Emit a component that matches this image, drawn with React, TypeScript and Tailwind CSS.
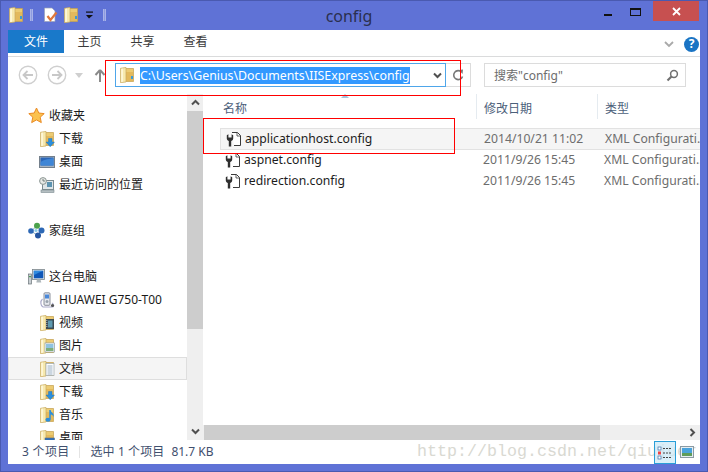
import React from "react";

const fontCls = "font-['Noto_Sans','Noto_Sans_CJK_SC',sans-serif]";

function Folder({ overlay, size = 16, dot = false }: { overlay?: React.ReactNode; size?: number; dot?: boolean }) {
  return (
    <svg width={size} height={size} viewBox="0 0 16 16" className="shrink-0">
      <path d="M6 1.5 H14.5 V14.5 H6 Z" fill="#eccb72" stroke="#c39f4e" strokeWidth=".7" />
      <path d="M6.5 5 H14 V14 H6.5 Z" fill="#e3b95c" />
      <path d="M1.5 1.3 L7 .4 V15 L1.5 15.7 Z" fill="#f7e9ae" stroke="#c9a95c" strokeWidth=".7" />
      <path d="M2.2 1.9 L4 1.6 V14.8 L2.2 15 Z" fill="#fdf6d6" />
      {dot && <rect x="12" y="9" width="2" height="3" fill="#3b9ad8" />}
      {overlay}
    </svg>
  );
}

const ovDown = (
  <g>
    <path d="M9.5 7.5 H13 V11 H15.5 L11.2 15.8 L7 11 H9.5 Z" fill="#2b8fdc" stroke="#1a6db0" strokeWidth=".4" />
  </g>
);
const ovVideo = (
  <g>
    <rect x="7" y="4" width="8" height="10" fill="#3d4a52" />
    <rect x="9" y="5.5" width="4.5" height="7" fill="#5f9ab0" />
    <path d="M7.8 5v8" stroke="#cdd6da" strokeWidth=".9" strokeDasharray="1 1" />
  </g>
);
const ovPic = (
  <g>
    <rect x="6" y="5" width="9.5" height="9" fill="#fff" stroke="#8b9aa3" strokeWidth=".7" />
    <rect x="7" y="6" width="7.5" height="4" fill="#8fc3e0" />
    <rect x="7" y="10" width="7.5" height="3" fill="#7fae7a" />
  </g>
);
const ovDoc = (
  <g>
    <rect x="7" y="2.5" width="8" height="12" fill="#fff" stroke="#9aa6ad" strokeWidth=".7" />
    <path d="M8.5 5h5M8.5 7h5M8.5 9h5M8.5 11h5M8.5 13h5" stroke="#7d99b3" strokeWidth=".8" />
  </g>
);
const ovMusic = (
  <g>
    <path d="M11 3 V12.5" stroke="#2b8fdc" strokeWidth="1.5" />
    <ellipse cx="9" cy="12.8" rx="2.6" ry="2" fill="#2b8fdc" />
    <path d="M11 3 C12.5 6 15.5 6 14.5 10 C14 8 12.5 7.5 11 7.5 Z" fill="#2b8fdc" />
  </g>
);
const ovDesk = (
  <g>
    <rect x="6" y="8" width="9.5" height="7" fill="#2f6fb8" stroke="#5a6f85" strokeWidth=".6" />
    <rect x="6" y="13.5" width="9.5" height="1.5" fill="#39526e" />
  </g>
);

function Star() {
  return (
    <svg width="17" height="17" viewBox="0 0 17 17" className="shrink-0">
      <path d="M8.5 1 L10.8 6 L16.2 6.6 L12.2 10.2 L13.3 15.6 L8.5 12.9 L3.7 15.6 L4.8 10.2 L.8 6.6 L6.2 6 Z" fill="#fbc24e" stroke="#ea8a24" strokeWidth="1" />
    </svg>
  );
}
function Desktop() {
  return (
    <svg width="16" height="16" viewBox="0 0 16 16" className="shrink-0">
      <rect x=".5" y="2.5" width="15" height="11" fill="#a9b4bf" stroke="#74808c" />
      <rect x="1.5" y="3.5" width="13" height="8" fill="#2b66b8" />
      <path d="M1.5 8 C6 5 10 5 14.5 4 V11.5 H1.5 Z" fill="#3f86d6" />
    </svg>
  );
}
function Recent() {
  return (
    <svg width="16" height="16" viewBox="0 0 16 16" className="shrink-0">
      <rect x="3.5" y="3.5" width="11" height="9" fill="#dfe5e7" stroke="#7c8a8f" />
      <rect x="8" y="5" width="5" height="5" fill="#5c93b0" />
      <circle cx="4" cy="4" r="3.4" fill="#e7e9e6" stroke="#8a9592" />
      <path d="M4 2v2h2" stroke="#5a6766" fill="none" strokeWidth=".8" />
      <rect x="2" y="13" width="13" height="2.5" fill="#b5bfc2" stroke="#7c8a8f" strokeWidth=".6" />
    </svg>
  );
}
function HomeGroup() {
  return (
    <svg width="17" height="17" viewBox="0 0 17 17" className="shrink-0">
      <path d="M9 4 L3 9 L9 13 L13 9 Z" stroke="#8fb4c8" fill="none" />
      <circle cx="9" cy="3.8" r="3" fill="#4ca24c" />
      <circle cx="3" cy="9" r="2.8" fill="#2d68b5" />
      <circle cx="13.5" cy="8.5" r="3" fill="#2d68b5" />
      <circle cx="10" cy="13.5" r="3" fill="#2555a0" />
      <circle cx="8" cy="8.5" r="1.6" fill="#8ecbe8" />
    </svg>
  );
}
function Computer() {
  return (
    <svg width="17" height="17" viewBox="0 0 17 17" className="shrink-0">
      <rect x=".5" y="6" width="3" height="10" fill="#c8ced2" stroke="#6a7479" strokeWidth=".7" />
      <rect x="1" y="8" width="2" height="1.2" fill="#4d9c5a" />
      <rect x="4.5" y="1.5" width="12" height="10" fill="#dfe4e7" stroke="#7c868c" strokeWidth=".8" />
      <rect x="5.8" y="2.8" width="9.5" height="7.5" fill="#0f57b8" />
      <path d="M5.8 7 C9 6 12 3.5 15.3 3 V2.8 H5.8 Z" fill="#2f8ae0" />
      <path d="M9 11.5h3.5l.8 3h-5z" fill="#aeb7bb" />
    </svg>
  );
}
function Phone() {
  return (
    <svg width="16" height="16" viewBox="0 0 16 16" className="shrink-0">
      <path d="M3.5 7 C1 9 1.5 14 4 15 H13 C15 15 15 12 13 11" fill="none" stroke="#a9a9c9" strokeWidth="1.1" />
      <rect x="5" y=".8" width="6" height="12.5" rx="1" fill="#e7e9ee" stroke="#6e7482" strokeWidth=".8" />
      <rect x="6" y="2.5" width="4" height="4" fill="#4a88d8" />
      <circle cx="8" cy="9.5" r="1.5" fill="#9aa3ad" />
      <circle cx="13.5" cy="13.5" r="1.6" fill="#555" />
    </svg>
  );
}
function Cfg() {
  return (
    <svg width="16" height="16" viewBox="0 0 16 16" className="shrink-0">
      <path d="M6 1.5 H11.5 L14.5 4.5 V14.5 H8" fill="#fff" stroke="#3a3a3a" strokeWidth="1" />
      <path d="M11 1.5 V5 H14.5" fill="none" stroke="#3a3a3a" strokeWidth=".8" />
      <path d="M.8 4.2 V7.4 C.8 9 2.2 9.8 2.8 9.9 V15.4 H5.2 V9.9 C5.8 9.8 7.2 9 7.2 7.4 V4.2 L5.6 3.2 V6.6 H2.4 V3.2 Z" fill="#2f2f2f" />
    </svg>
  );
}

function NavRow({ icon, label, depth = 0, selected = false, top = false }: { icon: React.ReactNode; label: string; depth?: number; selected?: boolean; top?: boolean }) {
  return (
    <div
      className={
        "h-[23px] shrink-0 flex items-center text-[12px] text-[#1a1a1a] border " +
        (selected ? "bg-[#f5f5f5] border-[#dedede]" : "border-transparent") +
        (top ? " mt-[23px]" : "")
      }
    >
      <div className={depth ? "w-[30px] shrink-0" : "w-[19px] shrink-0"} />
      <div className={depth ? "w-[20px] shrink-0 flex" : "w-[21px] shrink-0 flex"}>{icon}</div>
      <span className="whitespace-nowrap">{label}</span>
    </div>
  );
}

function FileRow({ name, date, selected = false }: { name: string; date: string; selected?: boolean }) {
  return (
    <div
      className={
        "h-[22px] -mt-px first:mt-0 flex items-center text-[12.2px] border-y " +
        (selected ? "bg-[#f5f5f5] border-[#e2e2e2] border-l" : "border-transparent")
      }
    >
      <div className="w-[24px] pl-[5px] shrink-0 flex"><Cfg /></div>
      <span className="w-[239px] shrink-0 text-[#1c1c1c] whitespace-nowrap">{name}</span>
      <span className="w-[121px] shrink-0 text-[#6d6d6d] whitespace-nowrap">{date}</span>
      <span className="text-[#6d6d6d] whitespace-nowrap">XML Configurati...</span>
    </div>
  );
}

function Chevron({ up = false }: { up?: boolean }) {
  return (
    <svg width="9" height="7" viewBox="0 0 9 7">
      <path d={up ? "M1 5.5 L4.5 2 L8 5.5" : "M1 1.5 L4.5 5 L8 1.5"} fill="none" stroke="#505050" strokeWidth="2" />
    </svg>
  );
}

function NavCircle({ left }: { left: boolean }) {
  return (
    <svg width="20" height="20" viewBox="0 0 20 20">
      <circle cx="10" cy="10" r="8.7" fill="#fff" stroke="#cfcfcf" strokeWidth="1.4" />
      <path d={left ? "M15 10 H6 M9.5 6 L5.5 10 L9.5 14" : "M5 10 H14 M10.5 6 L14.5 10 L10.5 14"} fill="none" stroke="#c8c8c8" strokeWidth="1.8" />
    </svg>
  );
}

export default function App() {
  return (
    <div className={"relative w-[708px] h-[472px] overflow-hidden bg-[#5f72d6] border border-[#4a5ab0] flex flex-col select-none " + fontCls}>
      {/* Title bar */}
      <div className="h-[29px] shrink-0 pl-[7px] pr-[8px] flex items-center relative">
        <div className="w-[104px] shrink-0 flex items-center pb-[1px]">
          <Folder size={16} dot />
          <div className="w-[3px] h-[12px] bg-[#8d9be0] border-x border-[#a9b3e8] ml-[6px] mr-[9px]" />
          <svg width="16" height="16" viewBox="0 0 16 16" className="shrink-0">
            <path d="M2.5 1 H10 L13 4 V14.5 H2.5 Z" fill="#fff" stroke="#9aa0b8" strokeWidth=".7" />
            <path d="M5.5 9 L8.5 13 L14.5 5.5" fill="none" stroke="#e0763a" strokeWidth="2.2" />
          </svg>
          <div className="ml-[5px]"><Folder size={16} dot /></div>
          <svg width="10" height="10" viewBox="0 0 10 10" className="ml-[6px] shrink-0">
            <rect x="1" y="1.5" width="7" height="1.2" fill="#111" />
            <path d="M1 5 H8 L4 8.6 Z" fill="#111" />
          </svg>
          <div className="w-[3px] h-[12px] bg-[#8d9be0] border-x border-[#a9b3e8] ml-[8px]" />
        </div>
        <div className="flex-1 text-center text-[16px] text-[#2a2f4e] pl-[2px]">config</div>
        <div className="w-[115px] shrink-0 flex items-start justify-end self-start h-full">
          <div className="w-[8px] h-[2px] bg-[#111] mt-[13px] mr-[18px]" />
          <div className="w-[11px] h-[8px] border border-t-[2px] border-[#111] mt-[7px] mr-[12px]" />
          <div className="w-[46px] h-[20px] bg-[#c75050] flex items-center justify-center text-white">
            <svg width="9" height="9" viewBox="0 0 9 9"><path d="M1 1 L8 8 M8 1 L1 8" stroke="#fff" strokeWidth="1.8" /></svg>
          </div>
        </div>
      </div>

      {/* Window */}
      <div className="mx-[7px] flex-1 min-h-0 bg-white flex flex-col">
        {/* Ribbon tabs */}
        <div className="h-[27px] shrink-0 flex items-start border-b border-[#dadbdc] text-[12px] text-[#3a3a3a]">
          <div className="w-[56px] h-[23px] bg-[#1979ca] text-white flex items-center justify-center">文件</div>
          <div className="h-[24px] w-[53px] flex items-center justify-center -ml-[1px]">主页</div>
          <div className="h-[24px] w-[53px] flex items-center justify-center">共享</div>
          <div className="h-[24px] w-[53px] flex items-center justify-center">查看</div>
          <div className="flex-1" />
          <div className="h-[24px] flex items-center mt-[2px] pr-[1px]">
            <svg width="10" height="7" viewBox="0 0 10 7" className="mr-[10px]"><path d="M1 1 L5 5 L9 1" stroke="#a9a9a9" strokeWidth="1.8" fill="none" /></svg>
            <div className="w-[15px] h-[15px] rounded-full bg-[#1a74c4] text-white text-[12px] font-bold flex items-center justify-center leading-none">?</div>
          </div>
        </div>

        {/* Address row */}
        <div className="h-[37px] shrink-0 flex items-start pt-[6px]">
          <div className="flex items-center h-[24px] ml-[10px]">
            <NavCircle left />
            <div className="w-[9px]" />
            <NavCircle left={false} />
            <svg width="8" height="5" viewBox="0 0 8 5" className="ml-[8px]"><path d="M0 0 H8 L4 5 Z" fill="#cfcfcf" /></svg>
            <svg width="12" height="13" viewBox="0 0 12 13" className="ml-[11px]"><path d="M6 1 L1.5 6 M6 1 L10.5 6 M6 1 V13" stroke="#8a8a8a" strokeWidth="2" fill="none" /></svg>
          </div>
          <div className="ml-[9px] w-[331px] h-[24px] border border-[#4ea6ea] bg-white flex items-center pl-[3px] pr-[3px]">
            <Folder size={16} dot />
            <span className="ml-[5px] bg-[#3399ff] text-white text-[12.35px] leading-[17px] whitespace-nowrap mt-px">C:\Users\Genius\Documents\IISExpress\config</span>
            <div className="flex-1" />
            <Chevron />
          </div>
          <div className="w-[25px] h-[24px] border border-l-0 border-[#dcdcdc] flex items-center justify-center">
            <svg width="12" height="13" viewBox="0 0 12 13"><path d="M9.5 3 A4.5 4.5 0 1 0 10.5 7.5" fill="none" stroke="#777" strokeWidth="1.6" /><path d="M7 1 L11 .5 L10.5 5 Z" fill="#777" /></svg>
          </div>
          <div className="ml-[13px] w-[202px] h-[24px] border border-[#dcdcdc] flex items-center pl-[9px] pr-[6px] text-[12px] text-[#6d6d6d]">
            <span className="whitespace-nowrap mt-px">搜索"config"</span>
            <div className="flex-1" />
            <svg width="13" height="13" viewBox="0 0 13 13"><circle cx="8" cy="5" r="3.4" fill="none" stroke="#707070" strokeWidth="1.5" /><path d="M5.5 7.5 L1.5 11.5" stroke="#707070" strokeWidth="2.2" /></svg>
          </div>
        </div>

        {/* Body */}
        <div className="flex-1 min-h-0 flex">
          {/* Nav pane */}
          <div className="w-[179px] shrink-0 overflow-hidden flex flex-col pt-[10px]">
            <NavRow icon={<Star />} label="收藏夹" />
            <NavRow depth={1} icon={<Folder overlay={ovDown} />} label="下载" />
            <NavRow depth={1} icon={<Desktop />} label="桌面" />
            <NavRow depth={1} icon={<Recent />} label="最近访问的位置" />
            <NavRow top icon={<HomeGroup />} label="家庭组" />
            <NavRow top icon={<Computer />} label="这台电脑" />
            <NavRow depth={1} icon={<Phone />} label="HUAWEI G750-T00" />
            <NavRow depth={1} icon={<Folder overlay={ovVideo} />} label="视频" />
            <NavRow depth={1} icon={<Folder overlay={ovPic} />} label="图片" />
            <NavRow depth={1} selected icon={<Folder overlay={ovDoc} />} label="文档" />
            <NavRow depth={1} icon={<Folder overlay={ovDown} />} label="下载" />
            <NavRow depth={1} icon={<Folder overlay={ovMusic} />} label="音乐" />
            <NavRow depth={1} icon={<Folder overlay={ovDesk} />} label="桌面" />
          </div>
          {/* Nav scrollbar */}
          <div className="w-[16px] shrink-0 bg-[#efefef] flex flex-col">
            <div className="h-[17px] flex items-center justify-center"><Chevron up /></div>
            <div className="h-[218px] bg-[#cdcdcd]" />
            <div className="flex-1" />
            <div className="h-[17px] flex items-center justify-center"><Chevron /></div>
          </div>
          {/* File pane */}
          <div className="flex-1 min-w-0 flex flex-col relative">
            <div className="h-[34px] shrink-0 flex text-[12px] text-[#4c607a] relative">
              <div className="w-[273px] pl-[20px] pt-[6px]">名称</div>
              <div className="w-[121px] pl-[7px] pt-[6px] border-l border-[#e5ebf0] h-[25px]">修改日期</div>
              <div className="flex-1 pl-[7px] pt-[6px] border-l border-[#e5ebf0] h-[25px]">类型</div>
              <div className="absolute left-[138px] top-0 w-0 h-0 border-x-[4px] border-x-transparent border-b-[4px] border-b-[#a6c4dc]" />
            </div>
            <div className="flex-1 min-h-0 ml-[17px] overflow-hidden">
              <FileRow selected name="applicationhost.config" date="2014/10/21 11:02" />
              <FileRow name="aspnet.config" date="2011/9/26 15:45" />
              <FileRow name="redirection.config" date="2011/9/26 15:45" />
            </div>
            {/* Horizontal scrollbar */}
            <div className="h-[15px] shrink-0 bg-[#efefef] flex items-center">
              <div className="w-[396px] h-full ml-[1px] bg-[#cdcdcd]" />
              <div className="flex-1" />
              <svg width="7" height="9" viewBox="0 0 7 9" className="mr-[4px]"><path d="M1.5 1 L5 4.5 L1.5 8" fill="none" stroke="#505050" strokeWidth="2" /></svg>
            </div>
          </div>
        </div>

        {/* Status bar */}
        <div className="h-[24px] shrink-0 flex items-center text-[12px] text-[#3f4f6e] relative">
          <span className="ml-[14px] whitespace-nowrap tracking-[0.3px]">3 个项目</span>
          <div className="w-px h-[12px] bg-[#e4e4e4] ml-[10px] mr-[10px]" />
          <span className="whitespace-nowrap tracking-[0.1px]">选中 1 个项目</span>
          <span className="ml-[7px] whitespace-nowrap">81.7 KB</span>
          <div className="flex-1" />
          <div className="relative z-10 w-[22px] h-[23px] mt-px border border-[#2a9fd8] bg-[#cbe8f6]/70 flex items-center justify-center">
            <svg width="16" height="14" viewBox="0 0 16 14">
              <rect x="1" y="1" width="3" height="3" fill="#fff" stroke="#3a6ea5" strokeWidth=".7" />
              <rect x="1" y="5.5" width="3" height="3" fill="#e44" />
              <rect x="1" y="10" width="3" height="3" fill="#fff" stroke="#3a6ea5" strokeWidth=".7" />
              <path d="M6 2.5h9M6 7h9M6 11.5h9" stroke="#444" strokeWidth="1" strokeDasharray="2 1" />
            </svg>
          </div>
          <div className="relative z-10 w-[22px] flex items-center justify-center">
            <svg width="14" height="12" viewBox="0 0 14 12">
              <rect x=".5" y=".5" width="13" height="11" fill="#e6eef2" stroke="#8b9aa3" />
              <rect x="2" y="2" width="10" height="5" fill="#4aa3dc" />
              <rect x="2" y="7" width="10" height="3" fill="#5f9c5a" />
            </svg>
          </div>
          <div className="w-[2px]" />
        </div>
      </div>
      <div className="h-[7px] shrink-0" />

      {/* Annotation overlays */}
      <div className="absolute left-[104px] top-[59px] w-[356px] h-[36px] border border-[#f00]" />
      <div className="absolute left-[202px] top-[117px] w-[252px] h-[36px] border border-[#f00]" />
      <div className="absolute left-[416px] top-[441px] font-['Liberation_Mono',monospace] text-[16.67px] leading-[20px] text-[#d9d9d2] whitespace-nowrap">http://blog.csdn.net/qiujuer</div>
    </div>
  );
}
